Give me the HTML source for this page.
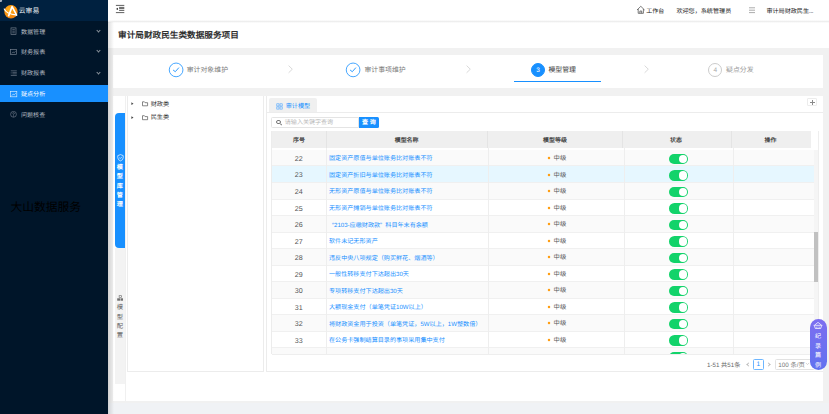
<!DOCTYPE html>
<html lang="zh-CN"><head><meta charset="utf-8">
<style>
*{box-sizing:border-box}
html,body{margin:0;padding:0;width:829px;height:414px;overflow:hidden;background:#f0f2f5}
body{font-family:"Liberation Sans",sans-serif;position:relative;color:#333;text-rendering:geometricPrecision}
.a{position:absolute;white-space:nowrap}
#side{left:0;top:0;width:108px;height:414px;background:#001529}
#logo{left:0;top:0;width:108px;height:21px;background:#002140}
.mi{left:21px;font-size:6.05px;color:#b4bac1;line-height:8px}
.chev{left:96.5px;width:3px;height:3px;border-right:0.8px solid #8a939c;border-bottom:0.8px solid #8a939c;transform:rotate(45deg)}
#top{left:108px;top:0;width:721px;height:21.5px;background:#fff}
#title{left:108px;top:21.5px;width:721px;height:26.9px;background:#fff}
.step{font-size:6.9px;color:#7a7a7a;line-height:8px;margin-top:0.3px}
.circ{width:14.2px;height:14.2px;border-radius:50%;border:0.8px solid #1890ff;top:62.8px}
.sep{width:5px;height:5px;border-right:0.7px solid #d0d0d0;border-top:0.7px solid #d0d0d0;transform:rotate(45deg) scaleX(0.75);top:66.3px}
.vt{font-size:6.3px;line-height:9.3px;width:10px;text-align:center;white-space:normal}
.row{left:271.6px;width:542.6px;border-bottom:1px solid #f0f0f0}
.num{left:271.6px;width:54.4px;text-align:center;font-size:7.1px;line-height:8px;color:#555}
.lnk{left:329px;font-size:6.1px;line-height:8px;color:#1890ff}
.dot{left:547.4px;width:3px;height:3px;border-radius:50%;background:radial-gradient(circle,#ff9d0a 0,#ff9d0a 45%,rgba(255,157,10,0) 72%)}
.lvl{left:553.6px;font-size:6.3px;line-height:8px;color:#555}
.sw{left:668.8px;width:19.5px;height:10.5px;border-radius:6px;background:#12d36a}
.sw i{position:absolute;right:1px;top:1.05px;width:8.4px;height:8.4px;border-radius:50%;background:#fff}
.th{font-size:5.95px;line-height:8px;font-weight:bold;color:#454545;top:136.8px}
.vl{width:0.6px;background:#eeeeee}

</style></head><body>
<!-- sidebar -->
<div id="side" class="a"></div>
<div id="logo" class="a"></div>
<svg class="a" style="left:0;top:0" width="22" height="22" viewBox="0 0 22 22"><defs><radialGradient id="og" cx="0.4" cy="0.35" r="0.7"><stop offset="0" stop-color="#ffb21a"/><stop offset="1" stop-color="#f07d0a"/></radialGradient></defs>
<circle cx="11" cy="11.7" r="6.7" fill="url(#og)"/>
<path d="M8.4,16.4 L12.1,6.6 L16.9,15.6" fill="none" stroke="#fff" stroke-width="1.6" stroke-linejoin="round"/>
<path d="M4.1,8.6 Q5.8,13.8 16.8,15" fill="none" stroke="#fff" stroke-width="1.3"/>
<circle cx="0.8" cy="0.8" r="1.3" fill="#cfd6e0" opacity="0.8"/></svg>
<div class="a" style="left:18.7px;top:8px;font-size:6.85px;color:#eef2f6;line-height:8px">云审易</div>

<div class="a mi" style="top:28.7px">数据管理</div>
<div class="a mi" style="top:48.9px">财务报表</div>
<div class="a mi" style="top:70.2px">财政报表</div>
<div class="a" style="left:0;top:85px;width:108px;height:17.3px;background:#1890ff"></div>
<div class="a mi" style="top:91.3px;color:#fff">疑点分析</div>
<div class="a mi" style="top:111.9px">问题核查</div>

<svg class="a" style="left:10px;top:27px" width="8" height="9" viewBox="0 0 8 9" fill="none" stroke="#7a8593" stroke-width="0.65"><rect x="1" y="0.9" width="5" height="6.6"/><path d="M2.3,2.6H4.8M2.3,4.2H4.8M2.3,5.8H4.8"/></svg>
<svg class="a" style="left:10px;top:49px" width="8" height="7" viewBox="0 0 8 7" fill="none" stroke="#7a8593" stroke-width="0.65"><rect x="0.6" y="0.6" width="5.8" height="5"/><path d="M1.8,4.4L3.2,3L4.2,3.8L5.6,2.2"/></svg>
<svg class="a" style="left:10px;top:70px" width="8" height="7" viewBox="0 0 8 7" fill="none" stroke="#7a8593" stroke-width="0.6"><path d="M0.8,0.8H6.8M2.4,2.4H6.8M2.4,3.9H6.8M0.8,5.5H6.8"/><path d="M0.8,2.4H1.5M0.8,3.9H1.5"/></svg>
<svg class="a" style="left:10px;top:90.5px" width="8" height="7" viewBox="0 0 8 7" fill="none" stroke="#d8ecff" stroke-width="0.65"><rect x="0.6" y="0.6" width="6.2" height="5.2"/><path d="M1.8,4.6L3.2,3.1L4.2,3.9L5.8,2.2"/></svg>
<svg class="a" style="left:10px;top:111px" width="8" height="7" viewBox="0 0 8 7" fill="none" stroke="#7a8593" stroke-width="0.6"><circle cx="3.5" cy="3.3" r="2.9"/><path d="M2.6,2.6Q2.8,1.6 3.6,1.7Q4.5,1.9 4.3,2.7Q4,3.3 3.5,3.6V4.1"/><circle cx="3.5" cy="5" r="0.25" fill="#8c96a3"/></svg>
<div class="a chev" style="top:29px"></div>
<div class="a chev" style="top:49.4px"></div>
<div class="a chev" style="top:70.5px"></div>
<div class="a" style="left:10.6px;top:201px;font-size:11.75px;font-weight:300;color:#000;line-height:14px">大山数据服务</div>

<!-- top bar -->
<div id="top" class="a"></div>

<svg class="a" style="left:114px;top:3px" width="12" height="12" viewBox="0 0 12 12"><path d="M1.9,2.4H10.3M5.1,4.4H10.3M5.1,5.6H10.3M5.1,7.4H10.3M1.9,9.6H10.3" stroke="#444" stroke-width="0.85"/><path d="M4,4.8L1.9,6L4,7.1Z" fill="#333"/></svg>
<svg class="a" style="left:636px;top:5.2px" width="10" height="10" viewBox="0 0 10 10" fill="none" stroke="#444" stroke-width="0.7"><path d="M1,5L4.8,1.3L8.6,5M2.2,4V8.3H7.4V4M3.9,8.3V6H5.7V8.3"/></svg>
<svg class="a" style="left:748px;top:6px" width="8" height="8" viewBox="0 0 8 8" stroke="#888" stroke-width="0.7"><path d="M1,1.8H7M1,4.2H7M1,6.6H7"/></svg>
<div class="a" style="left:646.3px;top:8px;font-size:6px;color:#1a1a1a;line-height:8px">工作台</div>
<div class="a" style="left:676.4px;top:8px;font-size:6.1px;color:#1a1a1a;line-height:8px">欢迎您，系统管理员</div>
<div class="a" style="left:766.4px;top:8px;font-size:6.1px;color:#1a1a1a;line-height:8px">审计局财政民生<span style="letter-spacing:-0.3px">...</span></div>

<div id="title" class="a"></div>
<div class="a" style="left:108px;top:19.8px;width:721px;height:3.4px;background:linear-gradient(rgba(0,0,0,0),rgba(0,0,0,.065) 50%,rgba(0,0,0,0))"></div>
<div class="a" style="left:118px;top:30.4px;font-size:8.65px;font-weight:bold;color:#303030;line-height:10px">审计局财政民生类数据服务项目</div>

<div class="a" style="left:108px;top:48.4px;width:721px;height:354.6px;background:#f1f1f1"></div>
<!-- steps card -->
<div class="a" style="left:113px;top:54.6px;width:710px;height:33.6px;background:#fff"></div>
<svg class="a" style="left:167px;top:61px" width="18" height="18" viewBox="0 0 18 18" fill="none" stroke="#1890ff" stroke-width="0.8"><circle cx="9.1" cy="8.9" r="6.85"/><path d="M6.1,9L8.3,10.7L11.9,6.6" stroke-width="0.9"/></svg>
<div class="a step" style="left:186.7px;top:66.6px">审计对象维护</div>
<svg class="a" style="left:288.1px;top:64.5px" width="6" height="9" viewBox="0 0 6 9" fill="none" stroke="#d2d2d2" stroke-width="0.85"><path d="M0.6,0.6L4.3,4.2L0.6,7.8"/></svg>
<svg class="a" style="left:344.2px;top:61px" width="18" height="18" viewBox="0 0 18 18" fill="none" stroke="#1890ff" stroke-width="0.8"><circle cx="9.1" cy="8.9" r="6.85"/><path d="M6.1,9L8.3,10.7L11.9,6.6" stroke-width="0.9"/></svg>
<div class="a step" style="left:364.4px;top:66.6px">审计事项维护</div>
<svg class="a" style="left:466.1px;top:64.5px" width="6" height="9" viewBox="0 0 6 9" fill="none" stroke="#d2d2d2" stroke-width="0.85"><path d="M0.6,0.6L4.3,4.2L0.6,7.8"/></svg>
<div class="a circ" style="left:530.9px;background:#1890ff"></div><div class="a" style="left:530.9px;top:66.5px;width:14.2px;text-align:center;font-size:6.5px;line-height:8px;color:#fff">3</div>
<div class="a step" style="left:548.4px;top:66.6px;color:#333">模型管理</div>
<div class="a" style="left:514px;top:80.5px;width:87px;height:1.5px;background:#1890ff"></div>
<svg class="a" style="left:644.4px;top:64.5px" width="6" height="9" viewBox="0 0 6 9" fill="none" stroke="#d2d2d2" stroke-width="0.85"><path d="M0.6,0.6L4.3,4.2L0.6,7.8"/></svg>
<div class="a circ" style="left:708px;border-color:#ccc"></div><div class="a" style="left:708px;top:67px;width:14.4px;text-align:center;font-size:6.5px;line-height:8px;color:#aaa">4</div>
<div class="a step" style="left:726px;top:67.2px;color:#9a9a9a">疑点分发</div>

<!-- main card -->
<div class="a" style="left:113px;top:95.5px;width:710px;height:305.5px;background:#fff"></div>
<!-- vertical tabs -->
<div class="a" style="left:114.9px;top:113px;width:9.8px;height:135px;background:#1890ff;border-radius:4px 0 0 4px"></div>
<div class="a" style="left:114.9px;top:248px;width:9.8px;height:135.8px;background:#f3f3f3"></div>
<div class="a" style="left:125.2px;top:95.5px;width:0.7px;height:305.5px;background:#f0f0f0"></div>
<svg class="a" style="left:116.5px;top:154px" width="7" height="7.5" viewBox="0 0 7 7.5" fill="none" stroke="#fff" stroke-width="0.7"><path d="M3.5,0.6L6.2,1.6V3.8Q6.1,6 3.5,6.9Q0.9,6 0.8,3.8V1.6Z"/><path d="M2.3,3.7L3.3,4.6L4.8,2.9"/></svg>
<div class="a vt" style="left:114.8px;top:163.1px;line-height:9.35px;color:#fff;font-weight:bold;font-size:6.1px">模<br>型<br>库<br>管<br>理</div>
<svg class="a" style="left:116.8px;top:294.5px" width="6.5" height="6" viewBox="0 0 6.5 6" fill="#707070"><rect x="1.8" y="0.3" width="2.9" height="2.3"/><rect x="0.2" y="3.3" width="2.8" height="2.4"/><rect x="3.5" y="3.3" width="2.8" height="2.4"/><rect x="2.5" y="0.9" width="1.5" height="1.1" fill="#f3f3f3"/></svg>
<div class="a vt" style="left:114.8px;top:303.1px;line-height:9.4px;color:#666">模<br>型<br>配<br>置</div>
<!-- tree panel -->
<div class="a" style="left:127.3px;top:96px;width:136.6px;height:276px;border:0.7px solid #ececec;border-top:none"></div>




<svg class="a" style="left:130px;top:100px" width="20" height="22" viewBox="0 0 20 22">
<path d="M1.4,2.3L3.5,3.7L1.4,5.1Z" fill="#444"/>
<path d="M1.4,16.2L3.5,17.6L1.4,19Z" fill="#444"/>
<path d="M12.5,1.8V5.8H17.6V2.7H15.1L14.4,1.8Z" fill="none" stroke="#555" stroke-width="0.7" stroke-linejoin="round"/>
<path d="M12.5,15.7V19.7H17.6V16.6H15.1L14.4,15.7Z" fill="none" stroke="#555" stroke-width="0.7" stroke-linejoin="round"/>
</svg>
<div class="a" style="left:150.7px;top:100.5px;font-size:6.15px;line-height:8px;color:#333">财政类</div>
<div class="a" style="left:150.7px;top:114.2px;font-size:6.15px;line-height:8px;color:#333">民生类</div>

<!-- right panel -->
<div class="a" style="left:266.3px;top:96px;width:556.7px;height:275.8px;border:0.7px solid #ececec;border-top:none;border-right:none"></div>
<div class="a" style="left:266.3px;top:112px;width:556.7px;height:0.7px;background:#ececec"></div>
<div class="a" style="left:268.6px;top:97.6px;width:48.8px;height:14.8px;background:#f0f0f0;border-radius:2px 2px 0 0"></div>
<div class="a" style="left:285.7px;top:102.8px;font-size:6.15px;line-height:8px;color:#1890ff">审计模型</div>
<svg class="a" style="left:275.6px;top:102.6px" width="7" height="7" viewBox="0 0 7 7" fill="none" stroke="#4aa3ff" stroke-width="0.6"><rect x="0.8" y="0.8" width="2.2" height="2.2"/><rect x="4" y="0.8" width="2.2" height="2.2"/><rect x="0.8" y="3.9" width="2.2" height="2.2"/><rect x="4" y="3.9" width="2.2" height="2.2"/></svg>
<div class="a" style="left:807.3px;top:97.9px;width:9.5px;height:8.6px;border:0.6px solid #ececec;border-radius:1px"></div>
<div class="a" style="left:809.6px;top:101.9px;width:5px;height:0.55px;background:#8a8a8a"></div>
<div class="a" style="left:811.85px;top:99.7px;width:0.55px;height:5px;background:#8a8a8a"></div>

<!-- search -->
<div class="a" style="left:271.3px;top:117.4px;width:87.7px;height:10.4px;border:0.7px solid #e4e4e4;border-radius:1.5px 0 0 1.5px"></div>
<div class="a" style="left:276px;top:119.5px;width:4.5px;height:4.5px;border:0.9px solid #777;border-radius:50%"></div>
<div class="a" style="left:279.6px;top:124px;width:2.4px;height:0.9px;background:#777;transform:rotate(45deg)"></div>
<div class="a" style="left:284.8px;top:118.5px;font-size:6.06px;line-height:8px;color:#b8b8b8">请输入关键字查询</div>
<div class="a" style="left:358.6px;top:117.4px;width:20.6px;height:10.4px;background:#1890ff;border-radius:0 1.5px 1.5px 0"></div>
<div class="a" style="left:362px;top:118.5px;font-size:6.06px;line-height:8px;color:#fff;font-weight:bold">查 询</div>

<!-- table -->

<div class="a" style="left:271.6px;top:131.2px;width:539.4px;height:16.5px;background:#efefef"></div>
<div class="a" style="left:811px;top:131.2px;width:7px;height:19px;background:#fff"></div>
<div class="a" style="left:0;top:0;width:829px;height:354px;overflow:hidden"><div class="a row" style="top:150.00px;height:16.00px;background:#fafafa"></div>
<div class="a num" style="top:154.94px">22</div>
<div class="a lnk" style="top:155.44px">固定资产原值与单位账务比对账表不符</div>
<svg class="a" style="left:546.6px;top:156.24px" width="4" height="4" viewBox="0 0 4 4"><circle cx="2" cy="2" r="1.25" fill="#ff9e14"/></svg>
<div class="a lvl" style="top:155.04px">中级</div>
<div class="a sw" style="top:153.64px"><i></i></div>
<div class="a row" style="top:166.00px;height:17.00px;background:#e6f7ff"></div>
<div class="a num" style="top:171.46px">23</div>
<div class="a lnk" style="top:171.96px">固定资产折旧与单位账务比对账表不符</div>
<svg class="a" style="left:546.6px;top:172.76px" width="4" height="4" viewBox="0 0 4 4"><circle cx="2" cy="2" r="1.25" fill="#ff9e14"/></svg>
<div class="a lvl" style="top:171.56px">中级</div>
<div class="a sw" style="top:170.16px"><i></i></div>
<div class="a row" style="top:183.00px;height:17.00px;background:#fafafa"></div>
<div class="a num" style="top:187.98px">24</div>
<div class="a lnk" style="top:188.48px">无形资产原值与单位账务比对账表不符</div>
<svg class="a" style="left:546.6px;top:189.28px" width="4" height="4" viewBox="0 0 4 4"><circle cx="2" cy="2" r="1.25" fill="#ff9e14"/></svg>
<div class="a lvl" style="top:188.08px">中级</div>
<div class="a sw" style="top:186.68px"><i></i></div>
<div class="a row" style="top:200.00px;height:16.00px;background:#ffffff"></div>
<div class="a num" style="top:204.50px">25</div>
<div class="a lnk" style="top:205.00px">无形资产摊销与单位账务比对账表不符</div>
<svg class="a" style="left:546.6px;top:205.80px" width="4" height="4" viewBox="0 0 4 4"><circle cx="2" cy="2" r="1.25" fill="#ff9e14"/></svg>
<div class="a lvl" style="top:204.60px">中级</div>
<div class="a sw" style="top:203.20px"><i></i></div>
<div class="a row" style="top:216.00px;height:17.00px;background:#fafafa"></div>
<div class="a num" style="top:221.02px">26</div>
<div class="a lnk" style="top:221.52px"><span style="margin-left:3px">“</span>2103-应缴财政款<span style="margin-right:3.2px">”</span>科目年末有余额</div>
<svg class="a" style="left:546.6px;top:222.32px" width="4" height="4" viewBox="0 0 4 4"><circle cx="2" cy="2" r="1.25" fill="#ff9e14"/></svg>
<div class="a lvl" style="top:221.12px">中级</div>
<div class="a sw" style="top:219.72px"><i></i></div>
<div class="a row" style="top:233.00px;height:16.00px;background:#ffffff"></div>
<div class="a num" style="top:237.54px">27</div>
<div class="a lnk" style="top:238.04px">软件未记无形资产</div>
<svg class="a" style="left:546.6px;top:238.84px" width="4" height="4" viewBox="0 0 4 4"><circle cx="2" cy="2" r="1.25" fill="#ff9e14"/></svg>
<div class="a lvl" style="top:237.64px">中级</div>
<div class="a sw" style="top:236.24px"><i></i></div>
<div class="a row" style="top:249.00px;height:17.00px;background:#fafafa"></div>
<div class="a num" style="top:254.06px">28</div>
<div class="a lnk" style="top:254.56px">违反中央八项规定（购买鲜花、烟酒等）</div>
<svg class="a" style="left:546.6px;top:255.36px" width="4" height="4" viewBox="0 0 4 4"><circle cx="2" cy="2" r="1.25" fill="#ff9e14"/></svg>
<div class="a lvl" style="top:254.16px">中级</div>
<div class="a sw" style="top:252.76px"><i></i></div>
<div class="a row" style="top:266.00px;height:16.00px;background:#ffffff"></div>
<div class="a num" style="top:270.58px">29</div>
<div class="a lnk" style="top:271.08px">一般性转移支付下达超出30天</div>
<svg class="a" style="left:546.6px;top:271.88px" width="4" height="4" viewBox="0 0 4 4"><circle cx="2" cy="2" r="1.25" fill="#ff9e14"/></svg>
<div class="a lvl" style="top:270.68px">中级</div>
<div class="a sw" style="top:269.28px"><i></i></div>
<div class="a row" style="top:282.00px;height:17.00px;background:#fafafa"></div>
<div class="a num" style="top:287.10px">30</div>
<div class="a lnk" style="top:287.60px">专项转移支付下达超出30天</div>
<svg class="a" style="left:546.6px;top:288.40px" width="4" height="4" viewBox="0 0 4 4"><circle cx="2" cy="2" r="1.25" fill="#ff9e14"/></svg>
<div class="a lvl" style="top:287.20px">中级</div>
<div class="a sw" style="top:285.80px"><i></i></div>
<div class="a row" style="top:299.00px;height:16.00px;background:#ffffff"></div>
<div class="a num" style="top:303.62px">31</div>
<div class="a lnk" style="top:304.12px">大额现金支付（单笔凭证10W以上）</div>
<svg class="a" style="left:546.6px;top:304.92px" width="4" height="4" viewBox="0 0 4 4"><circle cx="2" cy="2" r="1.25" fill="#ff9e14"/></svg>
<div class="a lvl" style="top:303.72px">中级</div>
<div class="a sw" style="top:302.32px"><i></i></div>
<div class="a row" style="top:315.00px;height:17.00px;background:#fafafa"></div>
<div class="a num" style="top:320.14px">32</div>
<div class="a lnk" style="top:320.64px">将财政资金用于投资（单笔凭证，5W以上，1W整数倍）</div>
<svg class="a" style="left:546.6px;top:321.44px" width="4" height="4" viewBox="0 0 4 4"><circle cx="2" cy="2" r="1.25" fill="#ff9e14"/></svg>
<div class="a lvl" style="top:320.24px">中级</div>
<div class="a sw" style="top:318.84px"><i></i></div>
<div class="a row" style="top:332.00px;height:16.00px;background:#ffffff"></div>
<div class="a num" style="top:336.66px">33</div>
<div class="a lnk" style="top:337.16px">在公务卡强制结算目录的事项采用集中支付</div>
<svg class="a" style="left:546.6px;top:337.96px" width="4" height="4" viewBox="0 0 4 4"><circle cx="2" cy="2" r="1.25" fill="#ff9e14"/></svg>
<div class="a lvl" style="top:336.76px">中级</div>
<div class="a sw" style="top:335.36px"><i></i></div>
<div class="a row" style="top:348.00px;height:17.00px;background:#fafafa"></div>
<svg class="a" style="left:546.6px;top:354.48px" width="4" height="4" viewBox="0 0 4 4"><circle cx="2" cy="2" r="1.25" fill="#ff9e14"/></svg>
<div class="a sw" style="top:351.88px"><i></i></div></div>
<div class="a" style="left:271.6px;top:353.6px;width:546.4px;height:0.8px;background:#eeeeee"></div>
<div class="a" style="left:271.3px;top:131.2px;width:0.6px;height:222.8px;background:#ececec"></div>
<div class="a vl" style="left:325.6px;top:131.2px;height:16.5px;background:#e4e4e4"></div>
<div class="a vl" style="left:487px;top:131.2px;height:16.5px;background:#e4e4e4"></div>
<div class="a vl" style="left:622.4px;top:131.2px;height:16.5px;background:#e4e4e4"></div>
<div class="a vl" style="left:730.5px;top:131.2px;height:16.5px;background:#e4e4e4"></div>
<div class="a vl" style="left:326px;top:147.7px;height:206.3px"></div>
<div class="a vl" style="left:488.3px;top:147.7px;height:206.3px"></div>
<div class="a vl" style="left:624.2px;top:147.7px;height:206.3px"></div>
<div class="a vl" style="left:732.9px;top:147.7px;height:206.3px"></div>
<div class="a th" style="left:293px">序号</div>
<div class="a th" style="left:394.7px">模型名称</div>
<div class="a th" style="left:543.1px">模型等级</div>
<div class="a th" style="left:670px">状态</div>
<div class="a th" style="left:764.5px">操作</div>
<!-- scrollbar -->
<div class="a" style="left:814.2px;top:150px;width:3.8px;height:204px;background:#f5f5f5"></div>
<div class="a" style="left:814.2px;top:231.8px;width:3.8px;height:50px;background:#c1c1c1"></div>
<div class="a" style="left:818px;top:131.2px;width:0.7px;height:222.8px;background:#eee"></div>

<!-- pagination -->
<div class="a" style="left:707px;top:362px;font-size:6.2px;line-height:8px;color:#666">1-51 共51条</div>
<div class="a" style="left:746.5px;top:362.8px;width:3px;height:3px;border-left:0.7px solid #bbb;border-bottom:0.7px solid #bbb;transform:rotate(45deg)"></div>
<div class="a" style="left:753.1px;top:359.2px;width:10.6px;height:10.4px;border:0.6px solid #6db6ff;border-radius:1.5px"></div>
<div class="a" style="left:753.1px;top:361.1px;width:10.6px;text-align:center;font-size:6.6px;line-height:8px;color:#1890ff">1</div>
<div class="a" style="left:767px;top:362.8px;width:3px;height:3px;border-right:0.7px solid #bbb;border-top:0.7px solid #bbb;transform:rotate(45deg)"></div>
<div class="a" style="left:774.8px;top:359.3px;width:40px;height:10.3px;border:0.6px solid #e2e2e2;border-radius:1.5px"></div><svg class="a" style="left:805px;top:362px" width="5" height="4" viewBox="0 0 5 4" fill="none" stroke="#bbb" stroke-width="0.6"><path d="M0.8,0.9L2.5,2.6L4.2,0.9"/></svg>
<div class="a" style="left:778.3px;top:361.7px;font-size:6.3px;line-height:8px;color:#777">100 条/页</div>

<div class="a" style="left:108px;top:21.5px;width:6px;height:392.5px;background:linear-gradient(90deg,rgba(0,0,0,.13),rgba(0,0,0,0))"></div>
<!-- floating badge -->
<div class="a" style="left:809.9px;top:318.8px;width:17.2px;height:51.7px;border-radius:9px;background:linear-gradient(#7c6ef0,#6272f0)"></div>
<div class="a vt" style="left:813px;top:332.3px;color:#fff;font-size:6.1px;line-height:9.4px">纪<br>录<br>篇<br>例</div>
<svg class="a" style="left:806px;top:316px" width="23" height="16" viewBox="806 316 23 16" fill="none" stroke="#fff" stroke-width="0.75" stroke-linejoin="round"><path d="M814.6,325.1L818,322.4L821.4,325.1"/><path d="M813.6,325.3H822.4"/><path d="M814.4,325.6L815.3,328.5H820.7L821.6,325.6"/><path d="M818,326.4V328.2M816.4,326.6V328M819.6,326.6V328" stroke-width="0.5"/></svg>

</body></html>
